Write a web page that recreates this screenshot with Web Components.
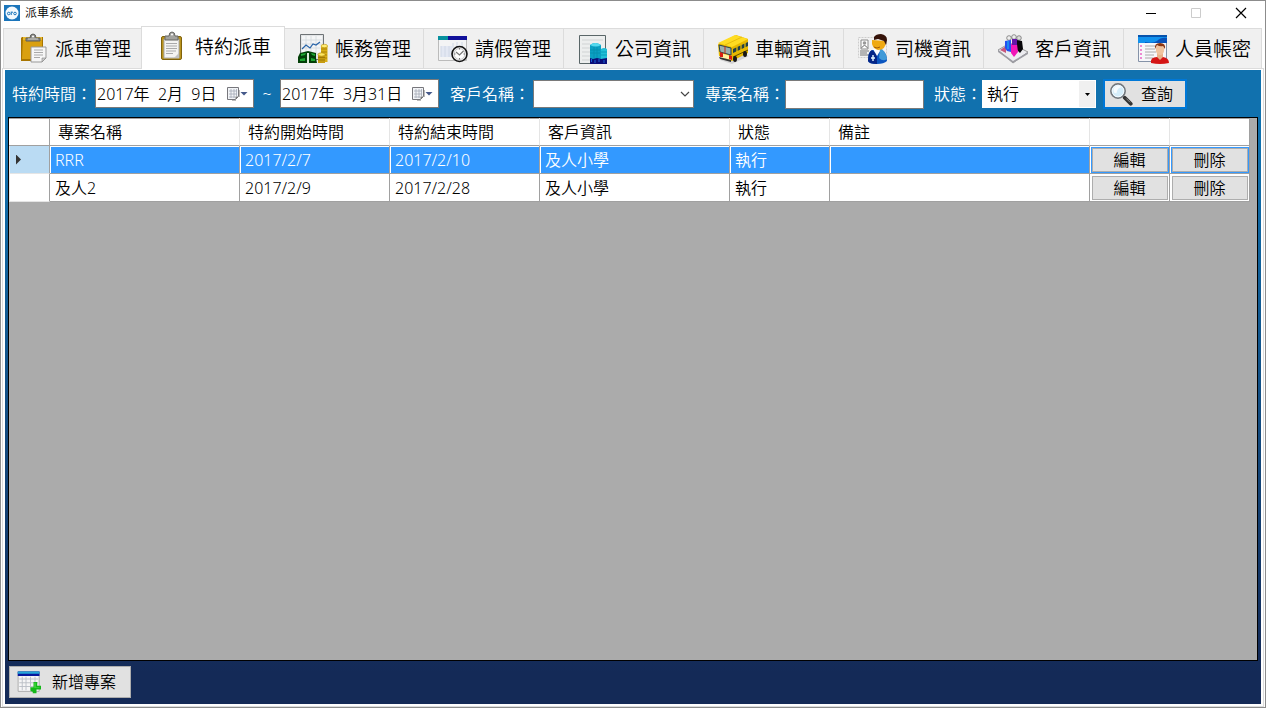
<!DOCTYPE html>
<html lang="zh-Hant">
<head>
<meta charset="utf-8">
<meta name="viewport" content="width=device-width, initial-scale=1">
<title>派車系統</title>
<style>
  html, body { margin: 0; height: 100%; }
  body {
    font-family: "Noto Sans", "Noto Sans CJK TC", sans-serif;
    font-weight: 350;
    font-size: 16px;
    line-height: 24px;
    color: #000;
    background: #fff;
  }
</style>
</head>
<body>
<app-window>
  <title-bar slot="title" caption="派車系統"></title-bar>
  <tab-strip slot="tabs">
    <tab-item icon="clipboard-paste">派車管理</tab-item>
    <tab-item icon="clipboard" active>特約派車</tab-item>
    <tab-item icon="finance">帳務管理</tab-item>
    <tab-item icon="leave">請假管理</tab-item>
    <tab-item icon="company">公司資訊</tab-item>
    <tab-item icon="bus">車輛資訊</tab-item>
    <tab-item icon="driver">司機資訊</tab-item>
    <tab-item icon="customers">客戶資訊</tab-item>
    <tab-item icon="account">人員帳密</tab-item>
  </tab-strip>
  <filter-bar>
    <date-field label="特約時間：" value="2017年  2月  9日"></date-field>
    <range-mark>~</range-mark>
    <date-field value="2017年  3月31日"></date-field>
    <select-field label="客戶名稱：" options="" kind="flat"></select-field>
    <text-field label="專案名稱："></text-field>
    <select-field label="狀態：" options="執行" kind="split"></select-field>
    <tool-button icon="search" focused>查詢</tool-button>
  </filter-bar>
  <project-grid></project-grid>
  <action-bar>
    <tool-button icon="table-add" large>新增專案</tool-button>
  </action-bar>
</app-window>

<script>
const ICONS = {
  'logo': `
    <rect width="32" height="32" fill="#1b75bb"/><circle cx="16" cy="16" r="13" fill="#f4f9fd"/>
    <g fill="none" stroke="#1b75bb" stroke-width="2"><circle cx="9.500" cy="17" r="2.600"/><path d="M14.500 13v7M15 16q1-2 3-2"/><circle cx="22" cy="17" r="2.600"/></g>`,
  'clipboard-paste': `
    <path d="M5 4h21v24H4V5z" fill="#a87500"/><path d="M6 4h19v22H5z" fill="#d9a010"/><path d="M6 4h19v3H6z" fill="#e8b92d"/>
    <path d="M9 8V5h4q0-4 3-4t3 4h4v3z" fill="#8e8e8a" stroke="#5f5f5c"/><path d="M11 6h10" stroke="#c9c9c5"/><circle cx="16" cy="3.500" r="1" fill="#fff"/>
    <path d="M14 14h15v11l-4 4H14z" fill="#f6f6f6" stroke="#999"/><path d="M29 25h-4v4z" fill="#ccc" stroke="#888" stroke-width=".6"/>
    <path d="M17 17h9M17 19.500h9M17 22h9M17 24.500h6" stroke="#a9a9a9" stroke-width="1.200"/>`,
  'clipboard': `
    <rect x="4.500" y="5.500" width="20" height="23" rx="1.500" fill="#b9931c" stroke="#80620c"/>
    <path d="M7 8h15v19H7z" fill="#f4f4f2" stroke="#aaa"/><path d="M22 22v5h-5z" fill="#c2c2c2"/>
    <path d="M8 9V5h4q0-4 3-4t3 4h3v4z" fill="#a3a39f" stroke="#666663"/><circle cx="15" cy="3.500" r="1" fill="#fff"/>
    <path d="M9 12.500h11M9 15h11M9 17.500h11M9 20h10M9 22.500h7" stroke="#aaa" stroke-width="1.200"/>`,
  'finance': `
    <path d="M3.500 1.500h23v25h-23z" fill="#e2e4e6" stroke="#6e7376"/><path d="M5 3h20v17H5z" fill="#f4f5f6"/>
    <path d="M5 7h20M5 11h20M5 15h20M9 3v17M14 3v17M19 3v17" stroke="#d3d9dd" stroke-width=".8"/>
    <path d="M5 16l4-4 4 3 3-4 3 1 4-3" fill="none" stroke="#2864a8" stroke-width="1.200"/>
    <path d="M3 20l8-2 8 2v5l1 5H1v-6z" fill="#033f08"/><path d="M4 21l5-1-1 2-4 1zM14 20l4 1v2l-3-1zM3 26l5-1v3H3zM14 25l4 1v2h-4z" fill="#1fa832"/><path d="M10 20h2v10h-2z" fill="#dfeede"/>
    <path d="M24 13h6.500v16H24z" fill="#d9ae16"/><path d="M24 16h6M24 19h6M24 22h6M24 25h6" stroke="#987300" stroke-width=".7"/><path d="M21 21h7v9h-7z" fill="#c69b12"/>
    <ellipse cx="27.300" cy="13" rx="3.300" ry="1.700" fill="#ffec73" stroke="#b88e0d" stroke-width=".6"/><ellipse cx="24.500" cy="21.500" rx="3.500" ry="1.700" fill="#ffe75f" stroke="#a88007" stroke-width=".6"/><path d="M21 24.500h7M21 27h7" stroke="#906d00" stroke-width=".7"/>`,
  'leave': `
    <path d="M1.500 3.500h28v24h-28z" fill="#f3f4f5" stroke="#bbb"/><path d="M1 3h29v4H1z" fill="#10109a"/><path d="M1 3h10v4H1z" fill="#07909e"/>
    <path d="M4 13h11v11H4z" fill="#e3e8f3"/><path d="M4 13v11M8 13v11M12 13v11M16 10v5M20 9v5M25 9v5" stroke="#d0d8e6"/>
    <circle cx="22.500" cy="21" r="7.500" fill="#ededee" stroke="#111" stroke-width="1.600"/><circle cx="22.500" cy="21" r="5.400" fill="#fff" stroke="#ccc"/>
    <path d="M19 19l3.500 3 4-4" fill="none" stroke="#777" stroke-width="1.200"/><path d="M22.500 15v1.500M22.500 25v1.500M17 21h1.500M26.500 21H28" stroke="#777"/>`,
  'company': `
    <path d="M2.500 2.500h26v28h-26z" fill="#eceeee" stroke="#5a6668"/><path d="M5 7h21M5 11h8M5 15h8M5 19h8M5 23h8M5 27h8" stroke="#d0d3d4"/>
    <path d="M13 12q5-4 11 0v18H13z" fill="#0ba0c3"/><path d="M13 12q5-4 11 0-5 3-11 0z" fill="#55d9ee"/><path d="M17 14v11M20 14v11M13 17h10M13 20h10" stroke="#0790b0"/>
    <path d="M24 16q3-2 6 0v14h-6z" fill="#22bfd8"/><path d="M24 19h6M24 22h6" stroke="#0b9dba"/>
    <path d="M13 25l3 1 4-1 4 1 6-1v6H13z" fill="#0a0e79"/><path d="M14.500 26v3M18 27v3M22 26v3M27 27v3" stroke="#1a62d6"/>`,
  'bus': `
    <path d="M3 27l12 4 17-8-9-4z" fill="#aaa" opacity=".4"/><path d="M1 11L19 2l12 4v14l-16 8-13-5z" fill="#e7b800"/>
    <path d="M1 10L18 2l13 4-16 8z" fill="#ffdc22"/><path d="M8 12L25 4" stroke="#e8bd0c"/>
    <path d="M2 12l12 3v7L3 19z" fill="#9cb0ae" stroke="#25434d"/><path d="M8 13v8" stroke="#bd2f19"/><path d="M16 16l15-7v4l-15 7z" fill="#223f48"/>
    <path d="M20 14v5M24 12v5M28 10v5" stroke="#f4c501" stroke-width="1.200"/><path d="M3 20l11 3v4L3 24z" fill="#fff1a0"/><path d="M3 19l3 1v4H3zM12 22l3 1v4l-3-1z" fill="#d91d11"/>
    <path d="M2 24l12 3v2L3 26z" fill="#333"/><path d="M16 24l15-7" stroke="#5f4c00"/><ellipse cx="18" cy="26" rx="2" ry="3" fill="#171717"/><ellipse cx="28" cy="21" rx="2" ry="3" fill="#171717"/>`,
  'driver': `
    <path d="M1.500 4.500h28v20h-28z" fill="#f2f2f2" stroke="#ccc" stroke-dasharray="2 1"/><path d="M4 7h7v9H4z" fill="#fff" stroke="#888"/><circle cx="7.500" cy="10" r="1.800" fill="#999"/><path d="M4.500 15q3-5 6 0M3 18h9M3 20h7M3 22h9" stroke="#777" fill="none"/>
    <path d="M11 28q0-11 5-11h8q6 2 6 11-3 3-10 3-8 0-9-3z" fill="#0b55c0"/><path d="M11 28q0-9 4-11l5 4v10q-8 0-9-3z" fill="#052687"/><path d="M23 15q6 3 7 11-4 3-8-1z" fill="#3f9ad8"/>
    <path d="M16 16l6-1 1 3-3 5z" fill="#fff"/><path d="M15 7l14 1q0 9-8 9-7-2-6-10z" fill="#efa912"/><path d="M17 4q2-3 7-3 6 1 6 6l-1 5-2-4-6-2-4 1z" fill="#351309"/><path d="M17 14q3 2 6 0" stroke="#a45d08" fill="none"/><path d="M16 22v6M14 25h4" stroke="#e7f8ff" stroke-width="1.400"/>`,
  'customers': `
    <path d="M1 17l12-7 18 9-15 11z" fill="#ececf0" stroke="#999"/><path d="M1 17l15 11v2L1 19zM16 28l15-9v2L16 30z" fill="#9d9da4"/><path d="M3 17l6-4v7z" fill="#b9194b" opacity=".7"/>
    <circle cx="12" cy="5" r="2.300" fill="#eee" stroke="#666" stroke-width=".7"/><circle cx="17" cy="4" r="2.300" fill="#eee" stroke="#666" stroke-width=".7"/><circle cx="22" cy="5" r="2.300" fill="#ddd" stroke="#666" stroke-width=".7"/>
    <path d="M8 8l6-1v12l-4-1-2-3z" fill="#244ff1"/><path d="M20 7l5 1 1 8-3 4-3-3z" fill="#08070a"/><path d="M11 8v8" stroke="#1bc4e9"/><path d="M14 11h6l1 8-4 5-3-4z" fill="#f016b7"/><path d="M15 6h5v6h-5z" fill="#6415a9"/>`,
  'account': `
    <path d="M1.500 2.500h28v26h-28z" fill="#f7f7fa" stroke="#8593a8"/><path d="M1 2h29v8H1z" fill="#1192ee"/><path d="M1 2h29v2H1z" fill="#0753ac"/><path d="M8 9q8 2 12-1 4-4 10-3v5H8z" fill="#0a51b8"/>
    <path d="M4 12v16" stroke="#e31da9" stroke-dasharray="2 2"/><path d="M8 13h10M8 16h10M8 19h11M8 22h9M8 25h8" stroke="#aaa"/>
    <path d="M14 30q-1-6 6-6h6q6 1 6 6-9 2-18 0z" fill="#d41515"/><path d="M20 20h6v4l-3 3-3-3z" fill="#e8b189"/><ellipse cx="23" cy="16.500" rx="4.200" ry="5.500" fill="#f0c39e"/><path d="M18 16q-1-6 5-6t5 6l-2-3q-3 1-6-1z" fill="#8b3511"/>`,
  'search': `
    <path d="M18 18l4 4" stroke="#888" stroke-width="3"/><path d="M21 21l8 8" stroke="#333" stroke-width="5" stroke-linecap="round"/><path d="M23 22l5 5" stroke="#999" stroke-width="1.200"/>
    <circle cx="12" cy="12" r="9.500" fill="#c0e4f7" stroke="#72777c" stroke-width="2.200"/><circle cx="12" cy="12" r="7.800" fill="#d4edfa" stroke="#fff"/><path d="M6 10q1-5 7-5 2 0 4 2-6 0-7 8-4 1-4-5z" fill="#fff" opacity=".8"/>`,
  'table-add': `
    <path d="M1.500 2.500h28v26h-28z" fill="#f5f5f6" stroke="#999"/><path d="M1 2h29v6H1z" fill="#07179c"/><path d="M1 2h29v3H1z" fill="#25a6d8"/>
    <path d="M3 12h25M3 17h25M3 22h25M7 9v18M12 9v18M18 9v18M24 9v18" stroke="#b9bdc5" stroke-width="1.200"/>
    <path d="M22 16h5v5h5v5h-6v5h-5v-2l-3-1v-5h4z" fill="#14b818"/><path d="M23 17h2v6h5v1h-7z" fill="#3fd63c"/>`,
  'calendar': `
    <path d="M1.500 1.500h11v9l-3 3h-8z" fill="#f2f4f7" stroke="#77777c"/><path d="M3 5h8M3 8h8M3 11h6M5 3v9M8 3v9M10.500 3v7" stroke="#a3a9b6" stroke-width=".8"/><path d="M12.500 10.500h-3v3z" fill="#777"/><path d="M13.500 4v7M6 14.500h4" stroke="#bbb"/>`
};

const define = (name, css, html) => {
  customElements.define(name, class extends HTMLElement {
    connectedCallback() {
      if (this.shadowRoot) return;
      const root = this.attachShadow({ mode: 'open' });
      root.innerHTML = `<style>*{box-sizing:border-box}${css}</style>${typeof html === 'function' ? html(this) : html}`;
    }
  });
};

define('ui-icon', `
  :host { display: block; flex: none; width: 32px; height: 32px; }
  svg { display: block; width: 100%; height: 100%; }`,
  el => `<svg viewBox="0 0 ${el.getAttribute('name') === 'calendar' ? '15 15' : '32 32'}" aria-hidden="true">${ICONS[el.getAttribute('name')]}</svg>`);

define('app-window', `
  :host { display: flex; flex-direction: column; min-height: 100vh; box-sizing: border-box; border: 1px solid #8c8c8c; background: #fff; }
  .frame { flex: 1; display: flex; flex-direction: column; margin: 0 1px; padding: 1px 2px 2px; border: 1px solid #dcdcdc; }
  main { flex: 1; display: flex; flex-direction: column; padding: 0 3px; background: linear-gradient(#1171ae, #1171ae 12%, #142a57 95%); }`,
  `<slot name="title"></slot><slot name="tabs"></slot><div class="frame"><main><slot></slot></main></div>`);

define('title-bar', `
  :host { display: flex; align-items: center; box-sizing: border-box; height: 26px; padding: 0 2px 2px 3px; font-size: 12px; line-height: 16px; }
  ui-icon { width: 16px; height: 16px; margin-right: 5px; }
  h1 { margin: 0; flex: 1; font: inherit; }
  button { width: 45px; height: 24px; padding: 0; border: 0; background: none; display: grid; place-items: center; }
  svg { width: 12px; height: 12px; fill: none; stroke: #000; }`,
  el => `<ui-icon name="logo"></ui-icon><h1>${el.getAttribute('caption')}</h1>
    <button aria-label="最小化"><svg viewBox="0 0 12 12"><path d="M1 6.500h10"/></svg></button>
    <button aria-label="最大化" disabled><svg viewBox="0 0 12 12" style="stroke:#ccc"><path d="M1.500 1.500h9v9h-9z"/></svg></button>
    <button aria-label="關閉"><svg viewBox="0 0 12 12"><path d="M1 1l10 10M11 1L1 11" stroke-width="1.200"/></svg></button>`);

define('tab-strip', `
  :host { display: flex; align-items: flex-end; height: 41px; padding: 0 2px; }`,
  `<slot></slot>`);

define('tab-item', `
  :host { display: block; flex: none; height: 40px; }
  :host([active]) { position: relative; z-index: 1; height: 43px; margin: 0 -2px -1px; }
  button { display: flex; align-items: center; gap: 6px; width: 140px; height: 100%; padding: 0 0 0 13px; font: inherit; font-size: 19px; line-height: 28px; color: #000; white-space: nowrap; text-align: left; background: #f0f0f0; border: 1px solid #dcdcdc; border-width: 1px 0 0 1px; }
  :host(:last-child) button { width: 139px; border-right-width: 1px; }
  :host([active]) button { width: 144px; padding: 0 0 3px 15px; background: #fff; border-right-width: 1px; }`,
  el => `<button role="tab" aria-selected="${el.hasAttribute('active')}"><ui-icon name="${el.getAttribute('icon')}"></ui-icon><slot></slot></button>`);

define('filter-bar', `
  :host { display: flex; align-items: center; min-height: 47px; padding-left: 4px; gap: 11px; color: #fff; }`,
  `<slot></slot>`);

define('range-mark', `
  :host { display: block; flex: none; width: 26px; margin: 0 -11px; text-align: center; }`,
  `<slot></slot>`);

const fieldCss = `
  :host { display: flex; align-items: center; gap: 3px; flex: none; }
  label { white-space: nowrap; }
  input, select { font: inherit; color: #000; background: #fff; border-radius: 0; outline: 0; }`;

define('date-field', fieldCss + `
  .box { display: flex; align-items: center; width: 159px; height: 29px; padding-right: 5px; background: #fff; border: 1px solid #7a7a7a; }
  input { flex: 1; min-width: 0; height: 24px; padding: 0 0 0 1px; border: 0; white-space: pre; }
  button { display: flex; align-items: center; flex: none; padding: 0; border: 0; background: none; }
  ui-icon { width: 15px; height: 15px; margin-right: -1px; }
  .arrow { width: 8px; height: 4px; background: #44588a; clip-path: polygon(0 0, 100% 0, 50% 100%); }`,
  el => `${el.hasAttribute('label') ? `<label for="date">${el.getAttribute('label')}</label>` : ''}
    <div class="box"><input id="date" type="text" value="${el.getAttribute('value')}" ${el.hasAttribute('label') ? '' : 'aria-label="結束日期"'}>
    <button aria-label="選擇日期"><ui-icon name="calendar"></ui-icon><span class="arrow"></span></button></div>`);

define('select-field', fieldCss + `
  .box { display: grid; }
  .box > * { grid-area: 1 / 1; }
  select { appearance: none; width: 161px; height: 28px; padding: 0 18px 0 4px; border: 1px solid #7a7a7a; }
  svg { justify-self: end; align-self: center; width: 18px; height: 26px; pointer-events: none; }
  :host([kind="split"]) { gap: 0; margin-left: -1px; }
  :host([kind="split"]) select { width: 114px; border-color: #fff; }`,
  el => `<label for="pick">${el.getAttribute('label')}</label>
    <div class="box"><select id="pick"><option>${el.getAttribute('options')}</option></select>
    ${el.getAttribute('kind') === 'split'
      ? '<svg viewBox="0 0 18 26"><path d="M1 0h16v26H1z" fill="#f0f0f0"/><path d="M7 12h5l-2.500 3z"/></svg>'
      : '<svg viewBox="0 0 18 26"><path d="M5 11l4 4 4-4" fill="none" stroke="#444" stroke-width="1.200"/></svg>'}</div>`);

define('text-field', fieldCss + `
  :host { gap: 0; }
  input { width: 139px; height: 29px; padding: 0 4px; border: 1px solid #7a7a7a; margin-top: 2px; }`,
  el => `<label for="text">${el.getAttribute('label')}</label><input id="text" type="text">`);

define('tool-button', `
  :host { display: block; flex: none; }
  :host([focused]) { margin-left: -4px; }
  button { display: flex; align-items: center; gap: 8px; width: 84px; height: 30px; padding: 0 0 0 4px; font: inherit; color: #000; white-space: nowrap; background: #e1e1e1; border: 1px solid #adadad; }
  :host([focused]) button { border: 2px solid #0078d7; }
  :host([large]) button { width: 122px; height: 32px; gap: 11px; padding-left: 7px; }
  ui-icon { width: 24px; height: 24px; }`,
  el => `<button><ui-icon name="${el.getAttribute('icon')}"></ui-icon><slot></slot></button>`);

define('action-bar', `
  :host { display: flex; align-items: center; height: 43px; padding: 0 0 2px 1px; box-sizing: border-box; }`,
  `<slot></slot>`);

const COLUMNS = ['專案名稱', '特約開始時間', '特約結束時間', '客戶資訊', '狀態', '備註'];
const ROWS = [
  ['RRR', '2017/2/7', '2017/2/10', '及人小學', '執行', ''],
  ['及人2', '2017/2/9', '2017/2/28', '及人小學', '執行', '']
];

define('project-grid', `
  :host { display: block; flex: 1; background: #ababab; border: 1px solid #000; padding-right: 7px; }
  table { width: 100%; table-layout: fixed; border-collapse: separate; border-spacing: 0; background: #fff; }
  th, td { height: 28px; padding: 0; border: 0 solid #a0a0a0; border-width: 0 1px 1px 0; font-weight: inherit; text-align: left; white-space: nowrap; overflow: hidden; }
  thead th { padding-left: 8px; border-right-color: #e5e5e5; box-shadow: inset 0 1px #a0a0a0; }
  thead th:first-child, thead th:last-child { border-right-color: #a0a0a0; }
  td { padding-left: 5px; }
  tbody th { border-bottom-color: #e5e5e5; border-left: 1px solid #e5e5e5; }
  .current th { background: #badbf3; }
  .current td { color: #fff; background: #3399ff; box-shadow: inset 1px 1px #fff; }
  .current i { display: block; width: 5px; height: 10px; margin-left: 6px; background: #333; clip-path: polygon(0 0, 100% 50%, 0 100%); }
  td.act { padding: 1px 0 0 1px; }
  button { display: block; width: 100%; height: 26px; padding: 0 1px 0 0; font: inherit; line-height: 22px; color: #000; text-align: center; background: #e1e1e1; border: 1px solid #fff; box-shadow: inset 0 0 0 1px #adadad; }
  .current button { border-color: #3399ff; }`,
  `<table>
    <colgroup><col style="width:41px"><col style="width:190px"><col style="width:150px"><col style="width:150px"><col style="width:190px"><col style="width:100px"><col><col style="width:80px"><col style="width:80px"></colgroup>
    <thead><tr><th></th>${COLUMNS.map(c => `<th scope="col">${c}</th>`).join('')}<th></th><th></th></tr></thead>
    <tbody>${ROWS.map((r, i) => `<tr${i ? '' : ' class="current"'}><th scope="row">${i ? '' : '<i></i>'}</th>${r.map(c => `<td>${c}</td>`).join('')}<td class="act"><button>編輯</button></td><td class="act"><button>刪除</button></td></tr>`).join('')}</tbody>
  </table>`);
</script>
</body>
</html>
